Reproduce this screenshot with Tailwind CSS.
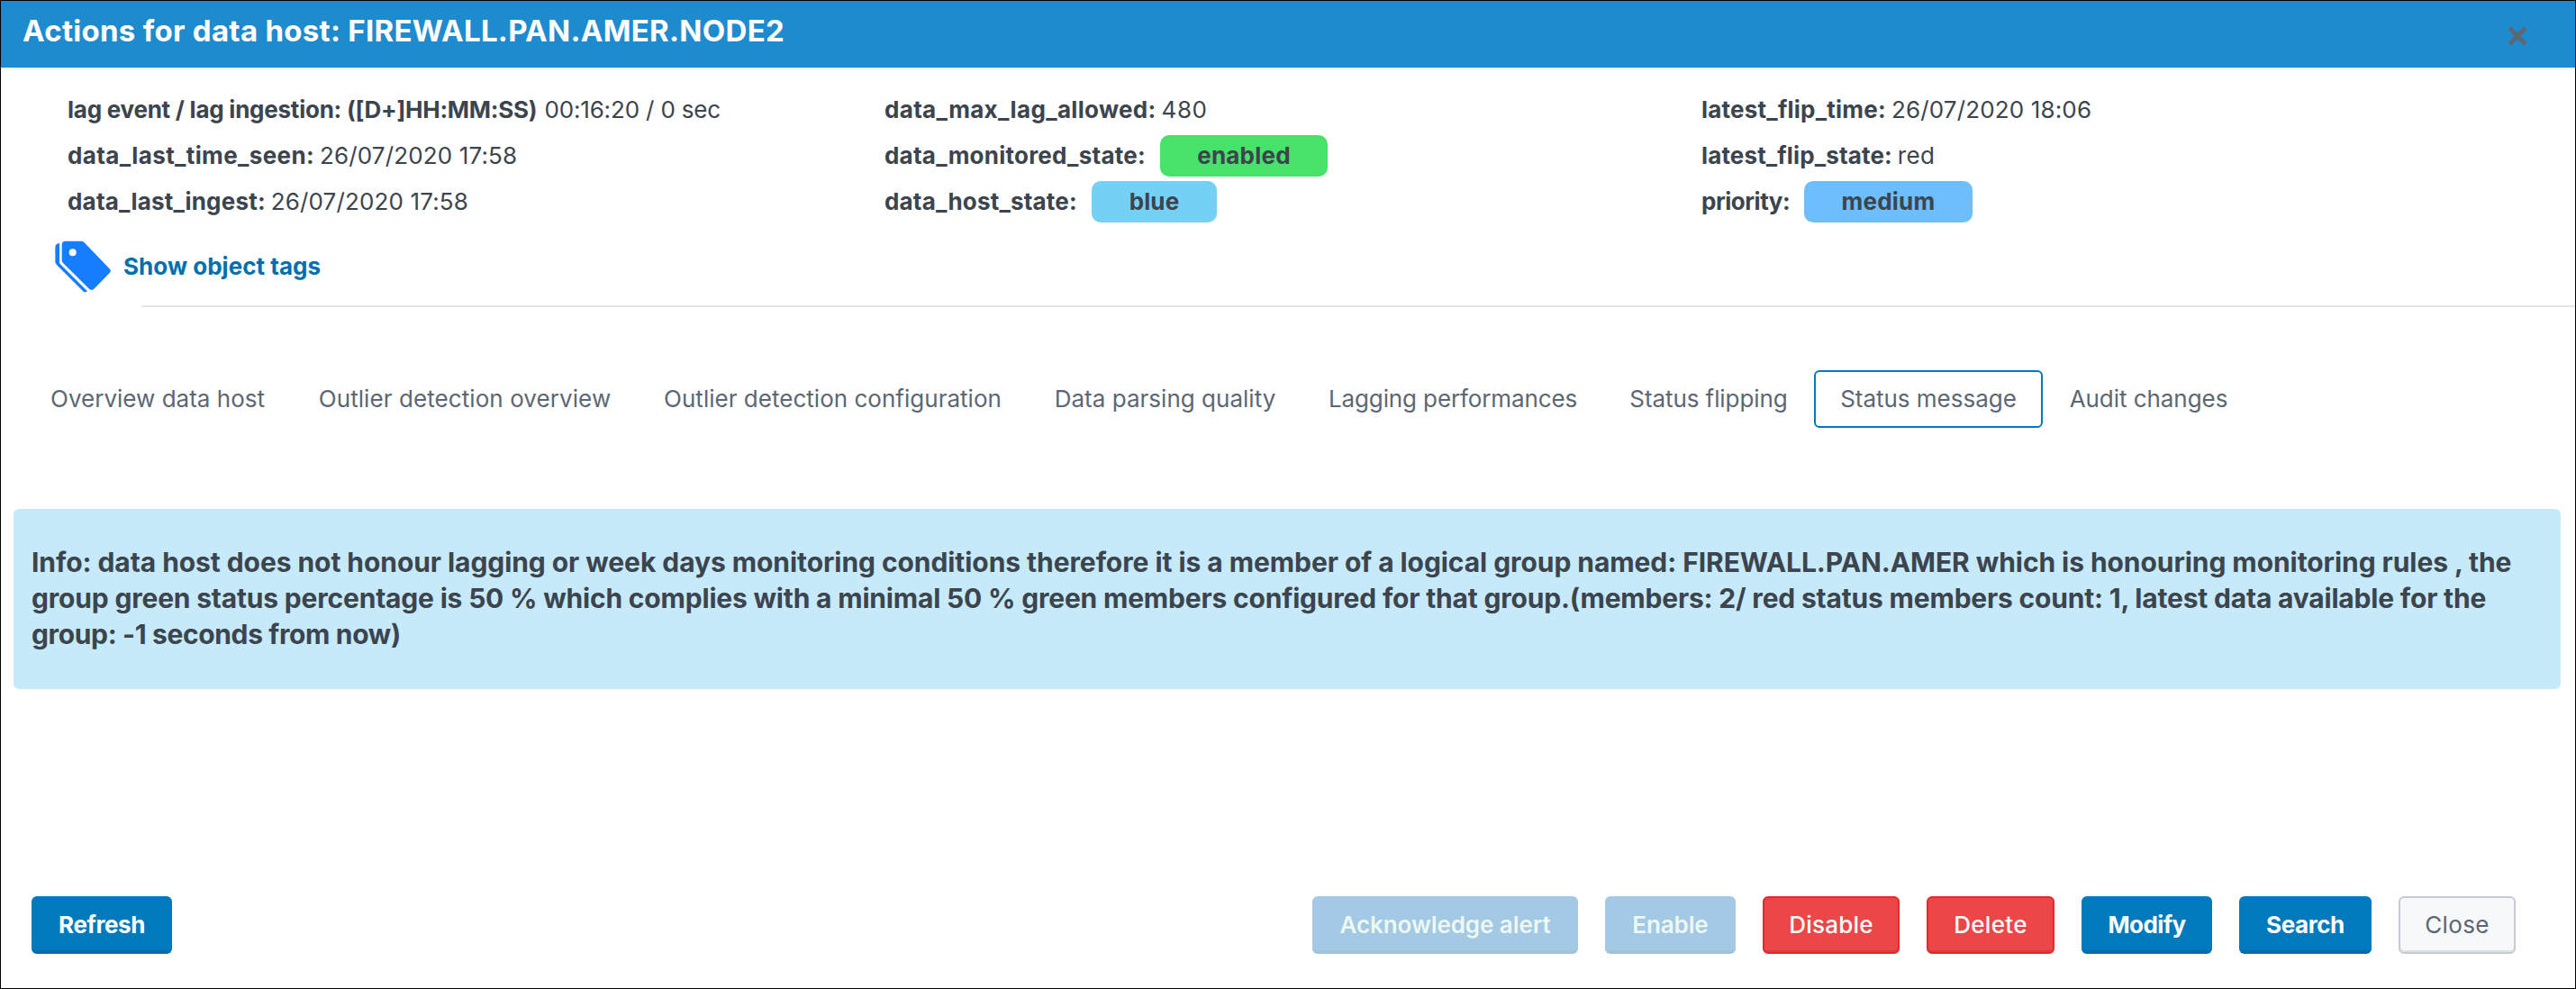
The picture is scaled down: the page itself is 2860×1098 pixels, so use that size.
<!DOCTYPE html>
<html lang="en">
<head>
<meta charset="utf-8">
<title>Actions for data host</title>
<script src="https://cdn.jsdelivr.net/npm/@tailwindcss/browser@4"></script>
</head>
<body class="bg-white">
<div class="flex h-[1098px] w-[2860px] flex-col overflow-hidden border border-black bg-white font-[Inter,sans-serif] text-[26px] leading-[46px] whitespace-nowrap text-[#3c444d]">

  <header class="flex h-[76px] shrink-0 items-start justify-between border-b-2 border-[#eeeff1] bg-[#1e8bcf] pl-[24px] pr-[53px]">
    <h1 class="pt-[13px] text-[33px] leading-[40px] font-bold tracking-[0.29px] text-white">Actions for data host: FIREWALL.PAN.AMER.NODE2</h1>
    <svg class="mt-7 size-[22px]" viewBox="0 0 22 22" fill="none" stroke="#5c6773" stroke-width="4.8"><path d="M2 2 20 20M20 2 2 20"/></svg>
  </header>

  <section class="mt-[22px] grid shrink-0 grid-cols-[907px_907px_1fr] gap-y-[5px] pl-[74px]">
    <div class="flex h-[46px] gap-[8px]"><b class="tracking-[-0.24px]">lag event / lag ingestion: ([D+]HH:MM:SS)</b><span class="tracking-[-0.16px]">00:16:20 / 0 sec</span></div>
    <div class="flex h-[46px] gap-[6px]"><b class="tracking-[0.33px]">data_max_lag_allowed:</b><span class="tracking-[0.5px]">480</span></div>
    <div class="flex h-[46px] gap-[6px]"><b class="tracking-[0.23px]">latest_flip_time:</b><span class="tracking-[0.15px]">26/07/2020 18:06</span></div>

    <div class="flex h-[46px] gap-[6px]"><b class="tracking-[0.37px]">data_last_time_seen:</b><span class="tracking-[0.14px]">26/07/2020 17:58</span></div>
    <div class="flex h-[46px]"><b class="w-[306px] tracking-[0.23px]">data_monitored_state:</b><b class="w-[186px] rounded-[10px] bg-[#47e26a] text-center tracking-[0.22px]">enabled</b></div>
    <div class="flex h-[46px] gap-[6px]"><b class="tracking-[0.14px]">latest_flip_state:</b><span class="tracking-[0.3px]">red</span></div>

    <div class="flex h-[46px] gap-[6px]"><b class="tracking-[0.2px]">data_last_ingest:</b><span class="tracking-[0.14px]">26/07/2020 17:58</span></div>
    <div class="flex h-[46px]"><b class="w-[230px] tracking-[0.19px]">data_host_state:</b><b class="w-[139px] rounded-[10px] bg-[#75d0f6] text-center tracking-[0.13px]">blue</b></div>
    <div class="flex h-[46px]"><b class="w-[114px] tracking-[-0.47px]">priority:</b><b class="w-[187px] rounded-[10px] bg-[#6cbeff] text-center tracking-[0.23px]">medium</b></div>
  </section>

  <a class="mt-[19px] flex h-[60px] shrink-0 items-center gap-[13px] pl-[59px] font-bold tracking-[0.03px] text-[#006fae]">
    <svg class="h-[60px] w-[64px]" viewBox="60 48 192 180" fill="#177dff">
      <path d="M78 60Q64 62 64 74V122Q64 127 68 131L155 218Q162 226 171 220L80 129Q78 127 78 123Z"/>
      <path fill-rule="evenodd" d="M98 53H150Q156 53 160 57L246 146Q251 152 246 158L193 212Q185 219 177 212L90 126Q86 122 86 116V65Q86 53 98 53ZM122 79a12 12 0 1 0 0 24a12 12 0 0 0 0-24Z"/>
    </svg>
    <span>Show object tags</span>
  </a>

  <div class="mt-[13px] ml-[156px] h-[2px] shrink-0 bg-[#e1e6eb]"></div>

  <nav class="mt-[70px] flex h-16 shrink-0 pl-[25px] text-center leading-[64px] text-[#5c6773]">
    <span class="w-[298px] tracking-[0.01px]">Overview data host</span>
    <span class="w-[384px] tracking-[0.08px]">Outlier detection overview</span>
    <span class="w-[433px] tracking-[0.02px]">Outlier detection configuration</span>
    <span class="w-[305px] tracking-[0.02px]">Data parsing quality</span>
    <span class="w-[334px] tracking-[-0.12px]">Lagging performances</span>
    <span class="w-[234px] tracking-[-0.08px]">Status flipping</span>
    <span class="w-[254px] rounded-md border-2 border-[#007abd] leading-[60px] tracking-[-0.02px]">Status message</span>
    <span class="w-[235px] tracking-[-0.05px]">Audit changes</span>
  </nav>

  <section class="mt-[90px] mr-[16px] ml-[14px] h-[200px] shrink-0 rounded-md bg-[#c7eafb] pt-[39px] pl-5 text-[30px] leading-[40px] font-bold">
    <p class="tracking-[-0.07px]">Info: data host does not honour lagging or week days monitoring conditions therefore it is a member of a logical group named: FIREWALL.PAN.AMER which is honouring monitoring rules , the</p>
    <p class="tracking-[-0.19px]">group green status percentage is 50 % which complies with a minimal 50 % green members configured for that group.(members: 2/ red status members count: 1, latest data available for the</p>
    <p class="tracking-[-0.36px]">group: -1 seconds from now)</p>
  </section>

  <footer class="mt-[230px] flex h-16 shrink-0 gap-[30px] pr-[66px] pl-[34px] text-center leading-[64px] text-white">
    <button class="mr-auto w-[156px] rounded-md border-b-4 border-[#006eaa] bg-[#007abd] pt-1 leading-[56px] font-bold tracking-[-0.43px]">Refresh</button>
    <button class="w-[295px] rounded-md border-b-4 border-[#a0c2dc] bg-[#a4c9e5] pt-1 leading-[56px] font-semibold tracking-[-0.07px] text-[#edf8f1]">Acknowledge alert</button>
    <button class="w-[145px] rounded-md border-b-4 border-[#a0c2dc] bg-[#a4c9e5] pt-1 leading-[56px] font-semibold tracking-[-0.12px] text-[#edf8f1]">Enable</button>
    <button class="w-[152px] rounded-md border-2 border-[#e8262b] bg-[#ec4748] leading-[60px] font-medium tracking-[0.22px] shadow-[inset_0_-2px_0_#d44041]">Disable</button>
    <button class="w-[142px] rounded-md border-2 border-[#e8262b] bg-[#ec4748] leading-[60px] font-medium tracking-[0.31px] shadow-[inset_0_-2px_0_#d44041]">Delete</button>
    <button class="w-[145px] rounded-md border-b-4 border-[#006eaa] bg-[#007abd] pt-1 leading-[56px] font-bold tracking-[-0.6px]">Modify</button>
    <button class="w-[147px] rounded-md border-b-4 border-[#006eaa] bg-[#007abd] pt-1 leading-[56px] font-bold tracking-[-0.42px]">Search</button>
    <button class="w-[130px] rounded-md border-2 border-[#c3cbd4] bg-[#f7f8fa] leading-[60px] tracking-[0.35px] text-[#5c6773] shadow-[inset_0_-2px_0_#dedfe1]">Close</button>
  </footer>
</div>
</body>
</html>
